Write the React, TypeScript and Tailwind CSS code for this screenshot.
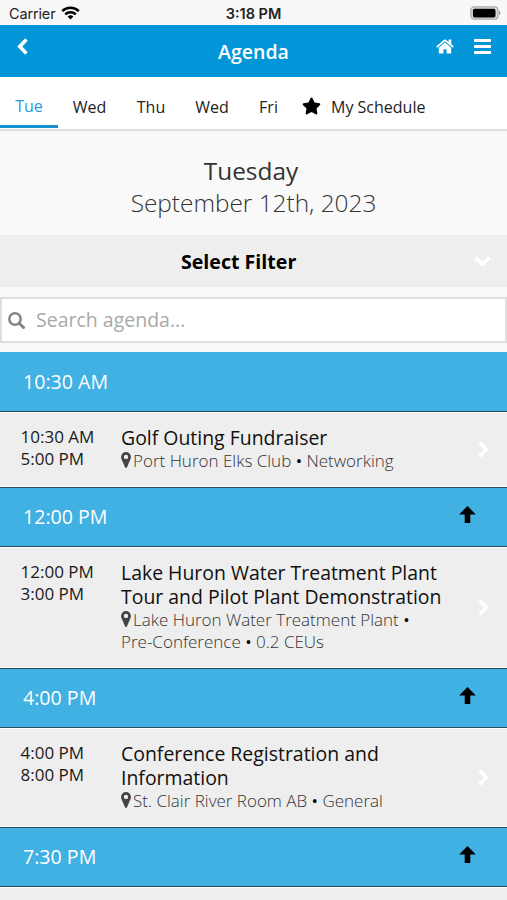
import React from 'react';
import clsx from 'clsx';
import { FaStar } from 'react-icons/fa';

interface Session {
  start: string;
  end: string;
  title: string;
  location: string;
  tags: string[];
}

interface Slot {
  time: string;
  sessions: Session[];
}

const days = [
  { label: 'Tue', className: 'w-[58px] mb-px text-[#2a9bd6] border-b-[3px] border-[#1590cf] pt-[9px]' },
  { label: 'Wed', className: 'w-[63px] pt-[7px]' },
  { label: 'Thu', className: 'w-[60px] pt-[7px]' },
  { label: 'Wed', className: 'w-[62px] pt-[7px]' },
  { label: 'Fri', className: 'w-[51px] pt-[7px]' },
];

const slots: Slot[] = [
  {
    time: '10:30 AM',
    sessions: [
      { start: '10:30 AM', end: '5:00 PM', title: 'Golf Outing Fundraiser', location: 'Port Huron Elks Club', tags: ['Networking'] },
    ],
  },
  {
    time: '12:00 PM',
    sessions: [
      {
        start: '12:00 PM',
        end: '3:00 PM',
        title: 'Lake Huron Water Treatment Plant Tour and Pilot Plant Demonstration',
        location: 'Lake Huron Water Treatment Plant',
        tags: ['Pre-Conference', '0.2 CEUs'],
      },
    ],
  },
  {
    time: '4:00 PM',
    sessions: [
      { start: '4:00 PM', end: '8:00 PM', title: 'Conference Registration and Information', location: 'St. Clair River Room AB', tags: ['General'] },
    ],
  },
  { time: '7:30 PM', sessions: [] },
];

const Chevron: React.FC<{ className?: string }> = ({ className = '' }) => (
  <svg className={clsx('h-[17px] w-[11px]', className)} viewBox="0 0 11 17" fill="none" stroke="currentColor" strokeWidth="3.6">
    <path d="M1.6 1.6 8.2 8.5 1.6 15.4" />
  </svg>
);

const HomeIcon = () => (
  <svg className="h-[15px] w-[18px]" viewBox="0 0 18 15" fill="currentColor">
    <path d="M9 3.5 2.8 8.7v5.2c0 .4.3.7.7.7h3.9v-4.3h3.2v4.3h3.9c.4 0 .7-.3.7-.7V8.7Z" />
    <path d="m17.6 7.2-2.3-2V.9c0-.2-.2-.4-.4-.4h-2c-.2 0-.4.2-.4.4v2L10 .8a1.6 1.6 0 0 0-2 0L.4 7.2c-.2.2-.2.4 0 .6l.6.7c.2.2.4.2.6 0L9 2.3l7.4 6.2c.2.2.4.1.6 0l.6-.7c.2-.2.2-.4 0-.6Z" />
  </svg>
);

const MenuIcon = () => (
  <svg className="h-[15px] w-[17px]" viewBox="0 0 17 15" fill="currentColor">
    <rect y="0" width="17" height="3" rx="0.7" />
    <rect y="6" width="17" height="3" rx="0.7" />
    <rect y="12" width="17" height="3" rx="0.7" />
  </svg>
);

const SearchIcon = () => (
  <svg className="h-[17px] w-[17px] text-[#858585]" viewBox="0 0 17 17" fill="none" stroke="currentColor">
    <circle cx="7" cy="7" r="5.7" strokeWidth="2.5" />
    <path d="m11.2 11.2 4.3 4.3" strokeWidth="3" strokeLinecap="round" />
  </svg>
);

const PinIcon = () => (
  <svg className="inline h-[16px] w-[10px] align-[-1px] text-[#444]" viewBox="0 0 10 16" fill="currentColor">
    <path
      fillRule="evenodd"
      d="M5 0a4.900 4.900 0 0 1 4.900 4.900c0 .8-.1 1.500-.4 2.100L6 15.300c-.4.900-1.600.900-2 0L.5 7C.2 6.400.1 5.700.1 4.900A4.900 4.900 0 0 1 5 0Zm0 2.700a2.200 2.200 0 1 0 0 4.400 2.200 2.200 0 0 0 0-4.400Z"
    />
  </svg>
);

const ArrowUp = () => (
  <svg className="mb-[5px] h-[17px] w-[17px] text-black" viewBox="0 0 17 17" fill="currentColor">
    <path d="M8.5 0 16.8 8.4h-5.500V17h-5.600V8.400H.2Z" />
  </svg>
);

const StatusBar = () => (
  <div className="grid h-[25px] grid-cols-3 items-center bg-[#f8f8f8] pt-[3px] pr-[6px] pl-[9px] font-['Inter','Liberation_Sans',sans-serif] text-[14.5px] text-[#222]">
    <div className="flex items-center gap-[6px]">
      <span className="tracking-[-0.15px]">Carrier</span>
      <svg className="-mt-[3px] h-[14px] w-[19px] text-black" viewBox="0 0 19 14" fill="none" stroke="currentColor">
        <path d="M1.2 5.2a12 12 0 0 1 16.6 0" strokeWidth="2.5" />
        <path d="M4.2 8.4a7.6 7.6 0 0 1 10.6 0" strokeWidth="2.4" />
        <path d="M9.5 13.6 6.6 10.6a4.2 4.2 0 0 1 5.8 0Z" fill="currentColor" stroke="none" />
      </svg>
    </div>
    <div className="-ml-[3px] text-center font-semibold whitespace-nowrap">3:18 PM</div>
    <svg className="-mt-[3px] h-[14px] w-[31px] justify-self-end" viewBox="0 0 31 14">
      <rect x="0.9" y="0.9" width="27" height="12.2" rx="3.4" fill="#ddd" stroke="#aaa" strokeWidth="1.3" />
      <rect x="2.9" y="2.8" width="22.6" height="8.6" rx="1.6" fill="#000" />
      <path d="M29 4.8a2.4 2.4 0 0 1 0 4.4Z" fill="#999" />
    </svg>
  </div>
);

const Header = () => (
  <header className="grid h-[52px] grid-cols-3 bg-[#0296d8] text-white">
    <Chevron className="mt-[13px] ml-[17px] rotate-180" />
    <h1 className="pt-[13px] text-center text-[19.5px] leading-[28px] font-semibold">Agenda</h1>
    <div className="flex justify-end gap-[20px] pt-[14px] pr-[16px]">
      <HomeIcon />
      <MenuIcon />
    </div>
  </header>
);

const DayTabs = () => (
  <nav className="flex h-[54px] border-b-2 border-[#dedede] bg-white text-[16px] text-[#222]">
    {days.map((day, i) => (
      <div key={i} className={clsx('flex items-center justify-center', day.className)}>
        {day.label}
      </div>
    ))}
    <div className="flex items-center gap-[10px] pt-[7px] pl-[8px]">
      <FaStar className="-mt-[2px] h-[18px] w-[19px] text-black" />
      <span>My Schedule</span>
    </div>
  </nav>
);

const SessionRow: React.FC<{ session: Session }> = ({ session }) => (
  <div className="flex border-y border-white bg-[#eeeeee] py-[13px] pl-[20.5px]">
    <div className="w-[100.5px] shrink-0 text-[17px] leading-[22px] text-[#1a1a1a]">
      <div>{session.start}</div>
      <div>{session.end}</div>
    </div>
    <div className="w-[324px] shrink-0 pb-px">
      <div className="text-[19.45px] leading-[24px] text-[#111]">{session.title}</div>
      <div className="text-[17px] leading-[22px] font-light text-[#333]">
        <PinIcon />
        <span className="ml-[2px]">{session.location}</span>
        {session.tags.map((tag) => (
          <React.Fragment key={tag}>
            <span className="font-normal text-black"> • </span>
            <span className="whitespace-nowrap">{tag}</span>
          </React.Fragment>
        ))}
      </div>
    </div>
    <div className="flex grow items-center justify-end pr-[18px] pb-px text-white">
      <Chevron />
    </div>
  </div>
);

export default function App() {
  return (
    <div className="h-[900px] w-[507px] overflow-hidden bg-[#f9f9f9] font-['Open_Sans','Noto_Sans',sans-serif]">
      <StatusBar />
      <Header />
      <DayTabs />

      <div className="h-[104px] pt-[24px] text-center text-[24.4px] leading-[32px] text-[#333]">
        <div className="-ml-[5px]">Tuesday</div>
        <div className="font-light">September 12th, 2023</div>
      </div>

      <div className="flex h-[52px] items-center justify-between bg-[#eeeeee] pt-px text-[19.6px] font-bold text-black">
        <div className="ml-[181px] whitespace-nowrap">Select Filter</div>
        <Chevron className="mr-[19px] rotate-90 text-white" />
      </div>

      <div className="mt-[10px] mb-[9px] flex h-[46px] items-center border-2 border-[#dfdfdf] bg-white pl-[6px] text-[19.5px] text-[#a9a9a9]">
        <SearchIcon />
        <span className="ml-[11px]">Search agenda...</span>
      </div>

      {slots.map((slot, i) => (
        <section key={slot.time}>
          <div
            className={clsx(
              'flex h-[60px] items-center justify-between border-y border-b-[#2f4a58] bg-[#41b0e2] pr-[31px] pl-[23px] text-[19.6px] text-white',
              i === 0 ? 'border-t-[#41b0e2]' : 'border-t-[#2f4a58]'
            )}
          >
            <span>{slot.time}</span>
            {i > 0 && <ArrowUp />}
          </div>
          {slot.sessions.map((session) => (
            <SessionRow key={session.title} session={session} />
          ))}
        </section>
      ))}
      <div className="h-[20px] border-t border-white bg-[#eeeeee]" />
    </div>
  );
}
